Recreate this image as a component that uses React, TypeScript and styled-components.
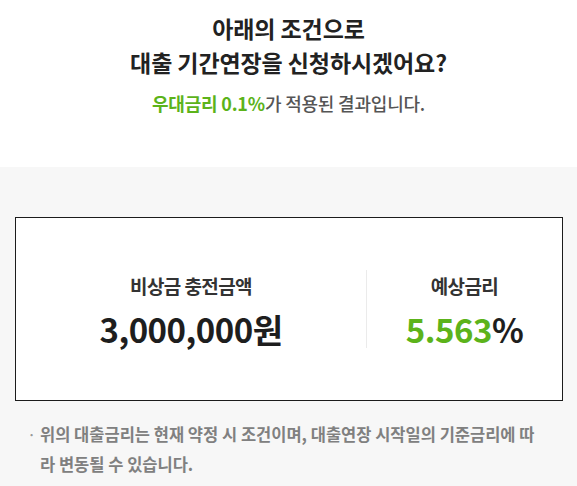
import React from 'react';
import styled, { createGlobalStyle } from 'styled-components';

const GlobalStyle = createGlobalStyle`
  html, body {
    margin: 0;
    padding: 0;
    background: #f7f7f7;
    font-family: "Noto Sans CJK KR", "Noto Sans", sans-serif;
    color: #222;
  }
  * {
    box-sizing: border-box;
  }
`;

const Page = styled.div`
  width: 577px;
  min-height: 486px;
  display: flex;
  flex-direction: column;
  background: #f7f7f7;
`;

const Header = styled.header`
  background: #fff;
  height: 167px;
  padding-top: 11px;
  display: flex;
  flex-direction: column;
  align-items: center;
`;

const Title = styled.h1`
  margin: 0;
  font-size: 23px;
  line-height: 34px;
  font-weight: 700;
  color: #222;
  text-align: center;
  letter-spacing: -0.1px;
`;

const Subtitle = styled.p`
  margin: 12px 0 0;
  font-size: 18px;
  line-height: 24px;
  font-weight: 500;
  color: #555;
  letter-spacing: -0.2px;
`;

const Accent = styled.strong`
  color: #5cb31a;
  font-weight: 700;
`;

const Body = styled.section`
  padding: 50px 14px 0 15px;
`;

const ResultCard = styled.div`
  height: 184px;
  border: 1px solid #1c1c1c;
  background: #fff;
  display: grid;
  grid-template-columns: 350px 1px 1fr;
  align-items: center;
`;

const Column = styled.div`
  display: flex;
  flex-direction: column;
  align-items: center;
  gap: 10px;
  padding-top: 3px;
`;

const Divider = styled.div`
  width: 1px;
  height: 78px;
  background: #ebebeb;
`;

const Label = styled.div`
  font-size: 19px;
  line-height: 26px;
  font-weight: 700;
  color: #333;
  letter-spacing: -0.6px;
`;

const Value = styled.div<{ $tone?: 'green' | 'dark' }>`
  font-size: 33px;
  line-height: 40px;
  font-weight: 700;
  color: ${(p) => (p.$tone === 'green' ? '#5cb31a' : '#1e1e1e')};
  letter-spacing: -0.5px;
`;

const Unit = styled.span`
  color: #1e1e1e;
`;

const Notes = styled.ul`
  list-style: none;
  margin: 18px 0 0;
  padding: 0 15px 0 12px;
`;

const Note = styled.li`
  display: flex;
  font-size: 16.5px;
  line-height: 30px;
  font-weight: 700;
  color: #808080;
  word-break: break-all;
`;

const Bullet = styled.span`
  flex: 0 0 13px;
  font-weight: 400;
  color: #999;
`;

export default function App() {
  return (
    <>
      <GlobalStyle />
      <Page>
        <Header>
          <Title>
            아래의 조건으로
            <br />
            대출 기간연장을 신청하시겠어요?
          </Title>
          <Subtitle>
            <Accent>우대금리 0.1%</Accent>가 적용된 결과입니다.
          </Subtitle>
        </Header>
        <Body>
          <ResultCard>
            <Column>
              <Label>비상금 충전금액</Label>
              <Value>3,000,000원</Value>
            </Column>
            <Divider />
            <Column>
              <Label>예상금리</Label>
              <Value $tone="green">
                5.563<Unit>%</Unit>
              </Value>
            </Column>
          </ResultCard>
          <Notes>
            <Note>
              <Bullet>·</Bullet>
              <span>위의 대출금리는 현재 약정 시 조건이며, 대출연장 시작일의 기준금리에 따라 변동될 수 있습니다.</span>
            </Note>
          </Notes>
        </Body>
      </Page>
    </>
  );
}
